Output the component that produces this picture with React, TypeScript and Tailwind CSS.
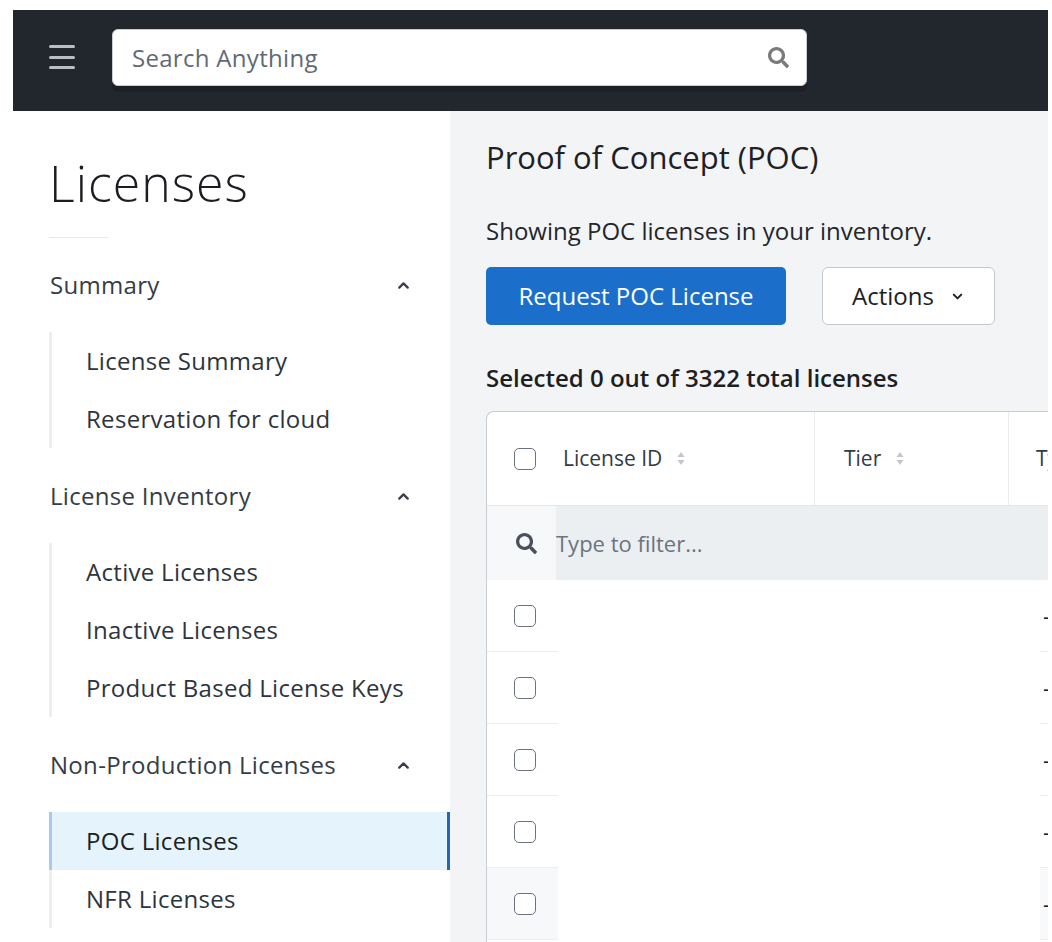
import { ChevronUp, ChevronDown } from 'lucide-react'
import { FaSearch } from 'react-icons/fa'

const sections = [
  { title: 'Summary', items: ['License Summary', 'Reservation for cloud'] },
  { title: 'License Inventory', items: ['Active Licenses', 'Inactive Licenses', 'Product Based License Keys'] },
  { title: 'Non-Production Licenses', items: ['POC Licenses', 'NFR Licenses'] },
]

const activeItem = 'POC Licenses'

function SortIcon() {
  return (
    <svg width="8" height="15" viewBox="0 0 8 15" className="shrink-0">
      <path d="M4 1 L7.5 6 L0.5 6 Z" fill="#c3c7cd" />
      <path d="M4 14 L7.5 9 L0.5 9 Z" fill="#c3c7cd" />
    </svg>
  )
}

function Checkbox() {
  return <span className="block h-[22px] w-[22px] rounded-[5px] border-[1.5px] border-[#6b7380] bg-white" />
}

function Sidebar() {
  return (
    <aside className="w-[437px] shrink-0 bg-white pt-[47px] tracking-[0.3px]">
      <h1 className="pl-[36px] text-[50px] leading-[50px] font-light tracking-[1px] text-[#1b1d21]">Licenses</h1>
      <div className="ml-[36px] mt-[29px] h-px w-[59px] bg-[#e6e8eb]" />
      {sections.map((s, i) => (
        <section key={s.title} className={i === 0 ? 'mt-[31px]' : 'mt-[32px]'}>
          <div className="flex h-[32px] items-center justify-between pl-[37px] pr-[38px]">
            <span className="text-[24px] text-[#363c46]">{s.title}</span>
            <ChevronUp size={17} strokeWidth={3.2} className="text-[#3a404a]" />
          </div>
          <ul className="ml-[36px] mt-[31px]">
            {s.items.map((item) =>
              item === activeItem ? (
                <li
                  key={item}
                  className="flex h-[58px] items-center border-l-[3px] border-r-[3px] border-l-[#a9cbe9] border-r-[#2466b1] bg-[#e5f3fc] pl-[34px] text-[24px] text-[#1a1f27]"
                >
                  {item}
                </li>
              ) : (
                <li
                  key={item}
                  className="flex h-[58px] items-center border-l-[3px] border-[#eceef0] pl-[34px] text-[24px] text-[#2d343e]"
                >
                  {item}
                </li>
              ),
            )}
          </ul>
        </section>
      ))}
    </aside>
  )
}

function LicenseTable() {
  const rows = [0, 1, 2, 3, 4, 5]
  return (
    <div className="mt-[17px] w-[800px] rounded-tl-[8px] border border-r-0 border-[#c8cdd5] bg-white">
      <div className="flex h-[94px] border-b border-[#e4e7ea] text-[21px] text-[#343a44]">
        <div className="flex w-[69px] items-center pl-[27px]">
          <Checkbox />
        </div>
        <div className="flex w-[259px] items-center gap-[15px] border-r border-[#eaecef] pl-[7px]">
          <span>License ID</span>
          <SortIcon />
        </div>
        <div className="flex w-[194px] items-center gap-[15px] border-r border-[#eaecef] pl-[29px]">
          <span>Tier</span>
          <SortIcon />
        </div>
        <div className="flex flex-1 items-center gap-[15px] pl-[27px]">
          <span>Type</span>
          <SortIcon />
        </div>
      </div>
      <div className="flex h-[74px]">
        <div className="flex w-[69px] items-center bg-[#f7f8fa] pl-[29px] text-[#4a515c]">
          <FaSearch size={21} />
        </div>
        <div className="flex flex-1 items-center bg-[#eceff1] text-[22px] text-[#6b7480]">Type to filter...</div>
      </div>
      {rows.map((r) => (
        <div key={r} className="flex h-[72px]">
          <div
            className={`flex w-[71px] items-center border-b border-[#eceef0] pl-[27px] ${r === 4 ? 'bg-[#f7f8fa]' : 'bg-white'}`}
          >
            <Checkbox />
          </div>
          <div className="w-[482px] bg-white" />
          <div
            className={`flex flex-1 items-center border-b border-[#eceef0] pl-[3px] text-[22px] text-[#222] ${r === 4 ? 'bg-[#f8f9fa]' : 'bg-white'}`}
          >
            -
          </div>
        </div>
      ))}
    </div>
  )
}

export default function App() {
  return (
    <div className="h-[942px] w-[1052px] overflow-hidden bg-white pl-[13px] pr-[4px] pt-[10px] font-['Open_Sans',sans-serif]">
      <header className="flex h-[101px] items-start bg-[#22272e] pl-[36px] pt-[19px]">
        <div className="mt-[16px] flex w-[26px] flex-col gap-[7.5px]">
          <span className="h-[3px] rounded-full bg-[#b9bec7]" />
          <span className="h-[3px] rounded-full bg-[#b9bec7]" />
          <span className="h-[3px] rounded-full bg-[#b9bec7]" />
        </div>
        <div className="ml-[37px] flex h-[57px] w-[695px] items-center justify-between rounded-[6px] border border-[#c9ced6] bg-white pl-[19px] pr-[17px] shadow-[0_6px_0_0_#1d2127]">
          <span className="text-[24px] tracking-[0.3px] text-[#626973]">Search Anything</span>
          <FaSearch size={21} className="text-[#7b7b7b]" />
        </div>
      </header>
      <div className="flex h-[831px]">
        <Sidebar />
        <main className="flex-1 overflow-hidden bg-[#f2f4f6] pl-[36px] pt-[26px]">
          <h2 className="text-[31px] leading-[40px] text-[#1e2024]">Proof of Concept (POC)</h2>
          <p className="mt-[38px] text-[24px] leading-[32px] text-[#23262b]">Showing POC licenses in your inventory.</p>
          <div className="mt-[20px] flex gap-[36px]">
            <button className="h-[58px] w-[300px] rounded-[5px] bg-[#1b6fca] text-[24px] text-white">
              Request POC License
            </button>
            <button className="flex h-[58px] w-[173px] items-center justify-center gap-[16px] rounded-[6px] border border-[#c4c9d0] bg-white text-[24px] text-[#1e2024]">
              Actions
              <ChevronDown size={15} strokeWidth={3.2} />
            </button>
          </div>
          <p className="mt-[37px] text-[24px] leading-[32px] font-semibold text-[#1d1f23]">
            Selected 0 out of 3322 total licenses
          </p>
          <LicenseTable />
        </main>
      </div>
    </div>
  )
}
